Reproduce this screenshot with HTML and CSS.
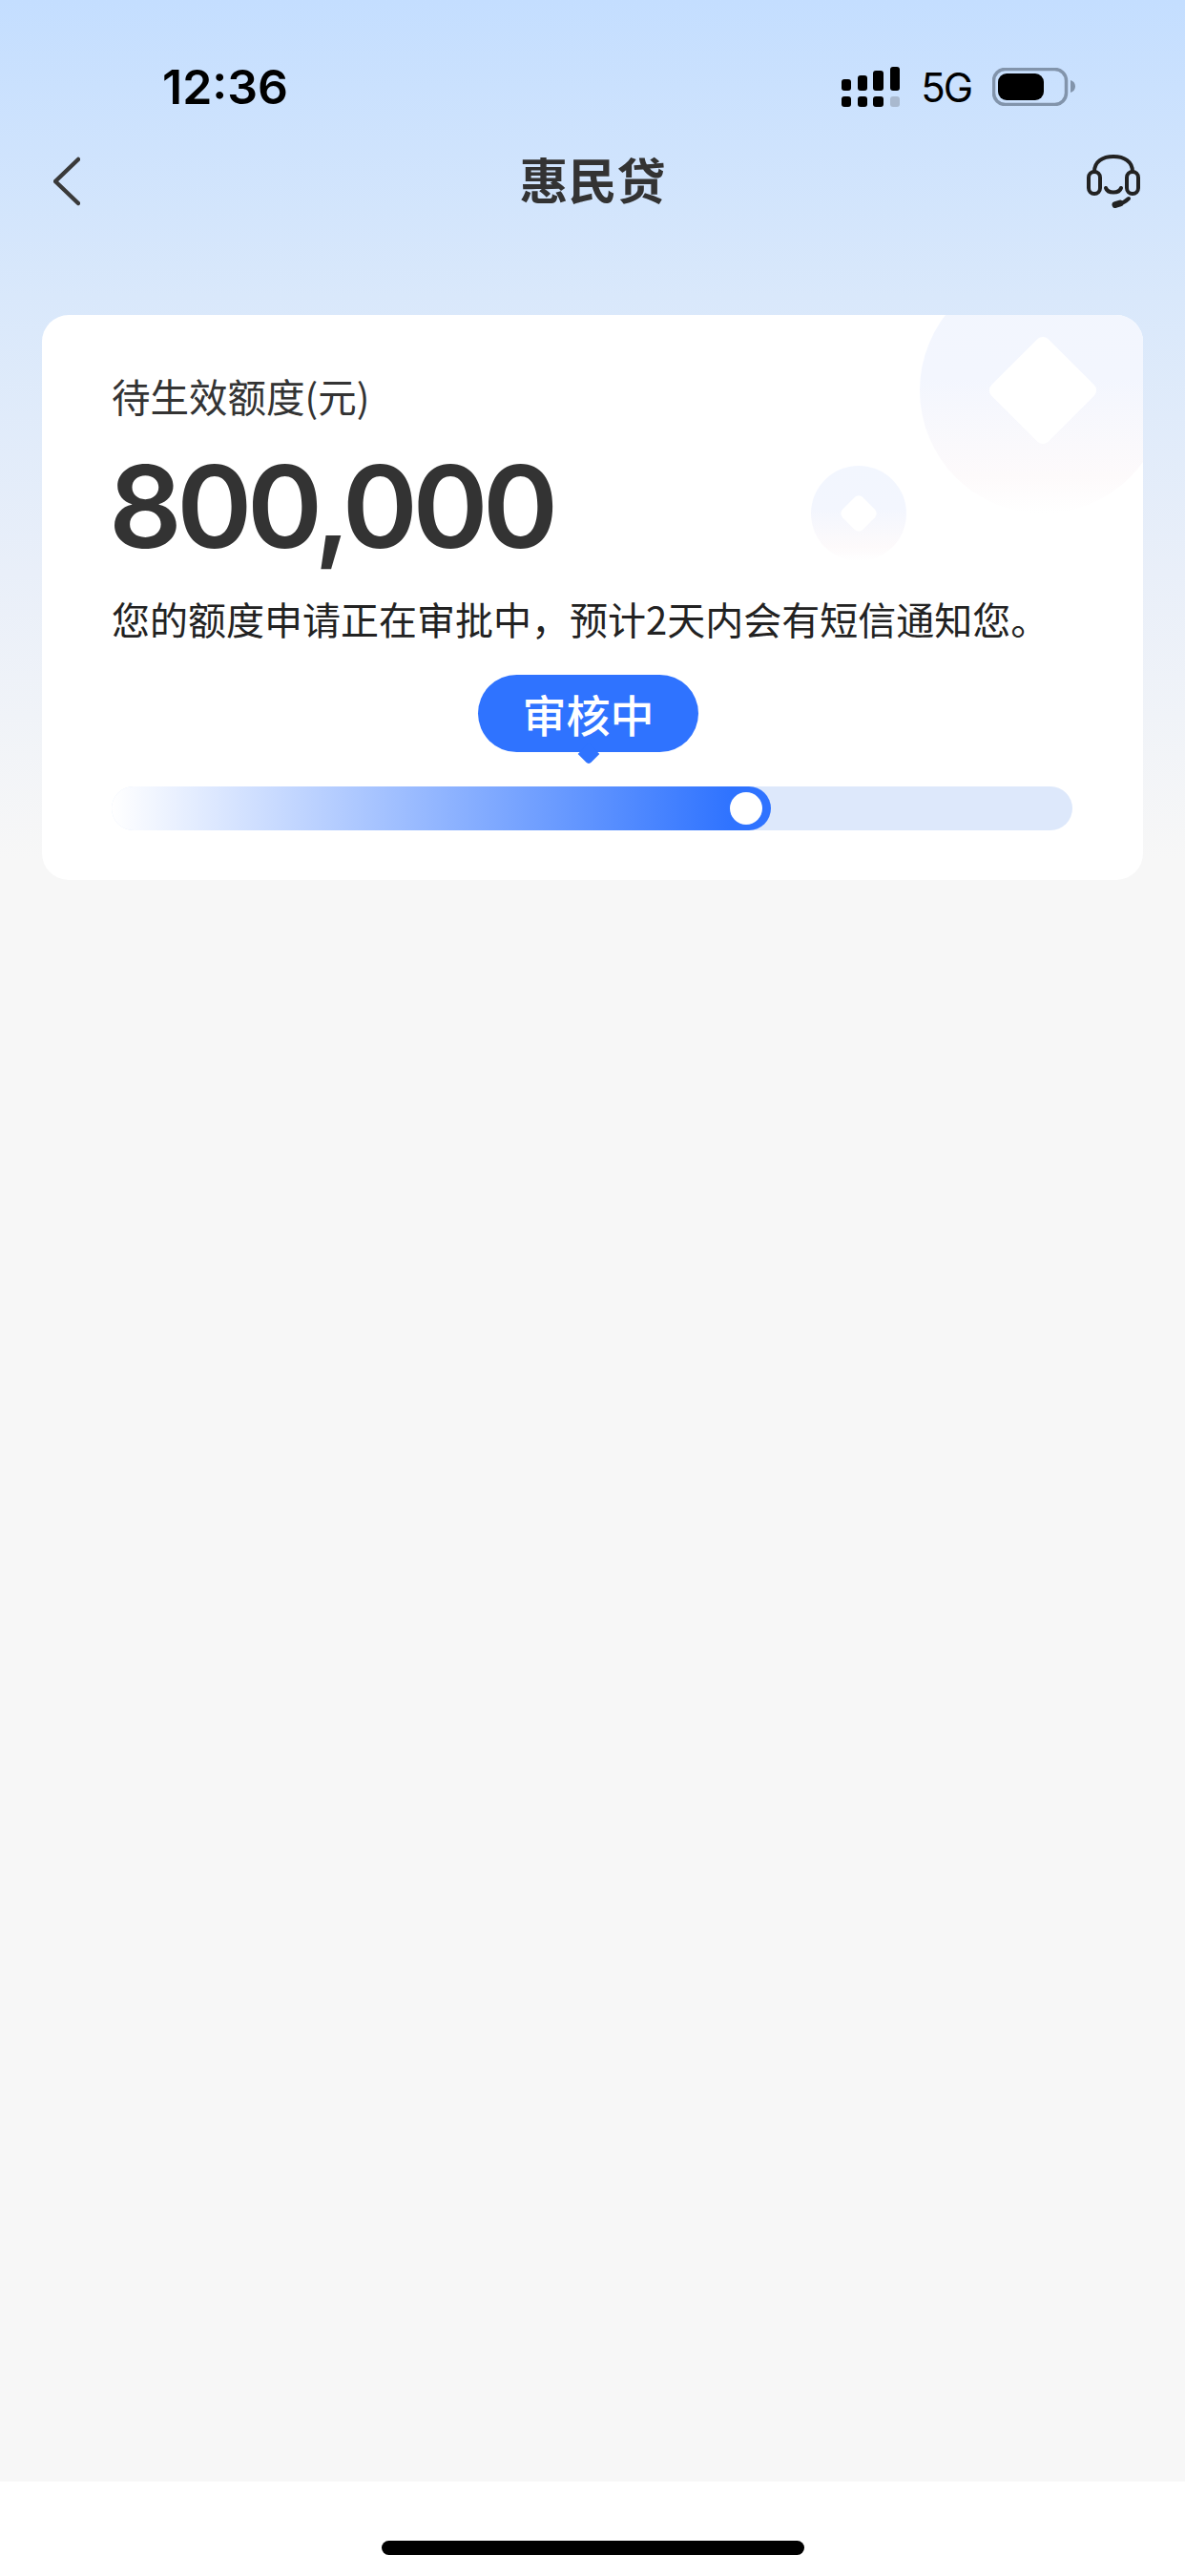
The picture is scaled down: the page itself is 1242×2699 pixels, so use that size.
FILE: index.html
```html
<!DOCTYPE html>
<html lang="zh">
<head>
  <meta charset="UTF-8">
  <title>惠民贷</title>
  <link rel="stylesheet" href="styles.css">
</head>
<body>
  <div class="page">
    <div class="status-bar">
      <span class="time">12:36</span>
      <div class="status-icons">
        <svg class="signal" width="61" height="42" viewBox="0 0 61 42">
          <rect x="0" y="13" width="10" height="12" rx="3"/>
          <rect x="17" y="9" width="10" height="16" rx="3"/>
          <rect x="33" y="4" width="11" height="21" rx="3"/>
          <rect x="51" y="0" width="10" height="25" rx="3"/>
          <rect x="0" y="31" width="10" height="11" rx="3"/>
          <rect x="17" y="31" width="10" height="11" rx="3"/>
          <rect x="33" y="31" width="11" height="11" rx="3"/>
          <rect class="signal-off" x="51" y="31" width="10" height="11" rx="3"/>
        </svg>
        <span class="network">5G</span>
        <svg class="battery" width="87" height="40" viewBox="0 0 87 40">
          <rect class="battery-shell" x="1.5" y="1.5" width="76" height="37" rx="12"/>
          <rect x="6" y="6" width="48" height="28" rx="9"/>
          <path class="battery-cap" d="M82 13c3 1 5 3 5 6.500s-2 5.500-5 6.500z"/>
        </svg>
      </div>
    </div>

    <div class="nav">
      <svg class="back" width="28" height="52" viewBox="0 0 28 52" fill="none" stroke="currentColor" stroke-width="4.500" stroke-linecap="round" stroke-linejoin="round">
        <polyline points="26 3 2 26 26 49"/>
      </svg>
      <h1 class="nav-title">惠民贷</h1>
      <svg class="support" width="56" height="56" viewBox="0 0 56 56" fill="none" stroke="currentColor" stroke-width="4" stroke-linecap="round" stroke-linejoin="round">
        <path d="M8 18C8 7 17 2 28 2s20 5 20 16"/>
        <rect x="2" y="18" width="12" height="23" rx="6"/>
        <rect x="42" y="18" width="12" height="23" rx="6"/>
        <path d="M20 35c2 6 14 6 16 0"/>
        <path d="M44 46c-3 3-7 5-11 6"/>
        <path d="M35 51l-5 1.500" stroke-width="7"/>
      </svg>
    </div>

    <div class="content">
      <div class="card">
        <div class="coin coin-large"><span class="coin-hole"></span></div>
        <div class="coin coin-small"><span class="coin-hole"></span></div>

        <div class="card-label">待生效额度(元)</div>
        <div class="card-amount">800,000</div>
        <div class="card-desc">您的额度申请正在审批中，预计2天内会有短信通知您。</div>

        <div class="tooltip">审核中</div>
        <div class="track">
          <div class="track-fill">
            <span class="thumb"></span>
          </div>
        </div>
      </div>
    </div>

    <div class="home-area">
      <span class="home-indicator"></span>
    </div>
  </div>
</body>
</html>
```

FILE: styles.css
```css
:root {
  --brand-blue: #2f73ff;
  --text-primary: #333333;
  --text-dark: #222222;
}

* {
  box-sizing: border-box;
}

body {
  margin: 0;
  font-family: "Noto Sans CJK SC", Roboto, sans-serif;
  color: var(--text-primary);
  background: #f7f7f7;
}

.page {
  display: flex;
  flex-direction: column;
  width: 1242px;
  height: 2699px;
  background: linear-gradient(#c4deff 0, #d9e8fb 310px, #e9eff9 600px, #f7f7f7 900px, #f7f7f7 100%);
}

.status-bar {
  display: flex;
  align-items: center;
  justify-content: space-between;
  height: 62px;
  margin-top: 60px;
  padding: 0 115px 0 170px;
  color: #000000;
  font-family: Inter, sans-serif;
}

.time {
  font-size: 50px;
  font-weight: 600;
}

.status-icons {
  display: flex;
  align-items: center;
  gap: 22px;
}

.signal-off {
  fill: #a9b9cf;
}

.network {
  font-size: 42px;
  letter-spacing: -2px;
}

.battery-shell {
  fill: none;
  stroke: #8294ab;
  stroke-width: 3.500;
}

.battery-cap {
  fill: #8294ab;
}

.nav {
  display: grid;
  grid-template-columns: 1fr auto 1fr;
  align-items: center;
  height: 90px;
  margin-top: 23px;
  padding: 0 47px;
}

.back {
  margin-left: 9px;
  color: #3a3a3a;
}

.nav-title {
  margin: -6px 0 0;
  font-size: 51px;
  font-weight: 700;
  line-height: 90px;
}

.support {
  justify-self: end;
  color: #222222;
}

.content {
  flex: 1;
  padding: 95px 44px 0;
}

.card {
  position: relative;
  overflow: hidden;
  height: 592px;
  padding: 61px 74px 0 73px;
  background: #ffffff;
  border-radius: 28px;
}

.coin {
  position: absolute;
  display: flex;
  align-items: center;
  justify-content: center;
  border-radius: 50%;
  background: linear-gradient(#f2f6fe 0, #f3f6fe 45%, #fdfafb 85%, #ffffff 100%);
}

.coin-large {
  top: -50px;
  left: 920px;
  width: 258px;
  height: 258px;
}

.coin-large .coin-hole {
  width: 84px;
  height: 84px;
  border-radius: 8px;
}

.coin-small {
  top: 158px;
  left: 806px;
  width: 100px;
  height: 100px;
}

.coin-small .coin-hole {
  width: 30px;
  height: 30px;
  border-radius: 6px;
}

.coin-hole {
  background: #ffffff;
  transform: rotate(45deg);
}

.card-label {
  font-size: 40.500px;
  line-height: 48px;
}

.card-amount {
  margin: 22px 0 0 -3px;
  font-family: Inter, sans-serif;
  font-size: 120px;
  font-weight: 600;
  letter-spacing: -5.500px;
  line-height: 140px;
}

.card-desc {
  margin-top: 23px;
  color: var(--text-dark);
  font-size: 40px;
  line-height: 48px;
  white-space: nowrap;
}

.tooltip {
  position: relative;
  width: 231px;
  height: 81px;
  margin: 35px 0 36px 384px;
  color: #ffffff;
  font-size: 46px;
  font-weight: 500;
  line-height: 81px;
  text-align: center;
  background: var(--brand-blue);
  border-radius: 41px;
}

.tooltip::after {
  content: "";
  position: absolute;
  top: 75px;
  left: 108px;
  width: 16px;
  height: 16px;
  background: var(--brand-blue);
  border-bottom-right-radius: 4px;
  transform: rotate(45deg);
}

.track {
  height: 46px;
  background: #dde8fb;
  border-radius: 23px;
}

.track-fill {
  display: flex;
  align-items: center;
  justify-content: flex-end;
  width: 691px;
  height: 46px;
  padding-right: 9px;
  background: linear-gradient(90deg, #ffffff 0, var(--brand-blue) 94%);
  border-radius: 23px;
}

.thumb {
  width: 34px;
  height: 34px;
  background: #ffffff;
  border-radius: 50%;
}

.home-area {
  display: flex;
  justify-content: center;
  height: 99px;
  padding-top: 62px;
  background: #ffffff;
}

.home-indicator {
  width: 443px;
  height: 15px;
  background: #000000;
  border-radius: 8px;
}
```
